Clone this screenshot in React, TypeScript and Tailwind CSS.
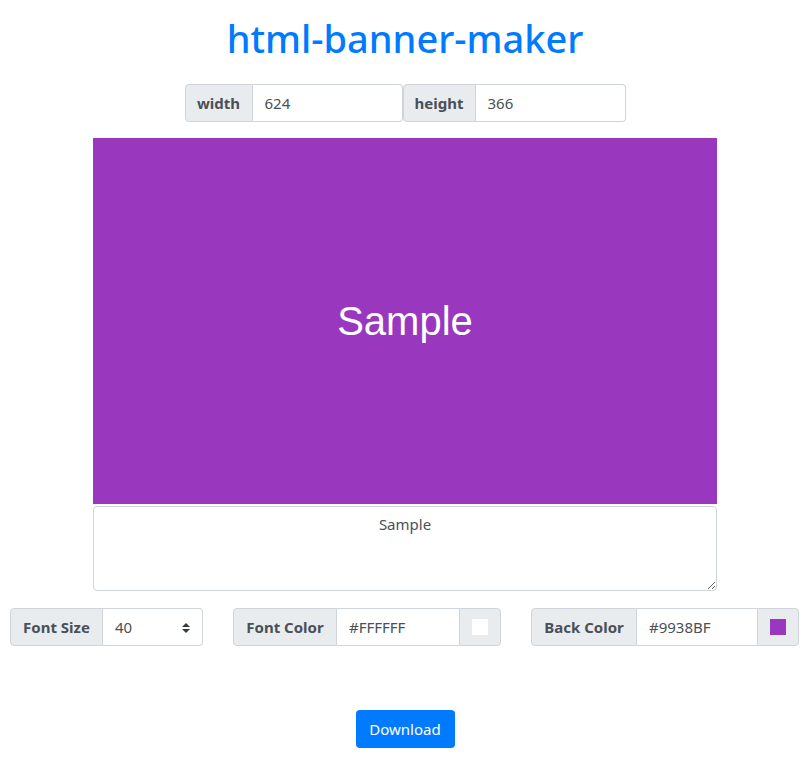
import { useState } from 'react';

const font = { fontFamily: '"Noto Sans", "Open Sans", sans-serif' };

function Addon({ label, w }: { label: string; w: string }) {
  return (
    <span
      className={`flex items-center justify-center ${w} h-full bg-[#e9ecef] border border-[#ced4da] text-[#495057] font-bold text-[15px]`}
    >
      {label}
    </span>
  );
}

function Swatch({ color }: { color: string }) {
  return (
    <span className="flex items-center justify-center w-[42px] h-full bg-[#e9ecef] border border-[#ced4da] rounded-r">
      <span className="block w-[16px] h-[16px]" style={{ backgroundColor: color }} />
    </span>
  );
}

export default function App() {
  const [width, setWidth] = useState('624');
  const [height, setHeight] = useState('366');
  const [text, setText] = useState('Sample');
  const [fontColor, setFontColor] = useState('#FFFFFF');
  const [backColor, setBackColor] = useState('#9938BF');

  return (
    <div className="w-[810px] min-h-[772px] bg-white flex flex-col items-center" style={font}>
      <h1 className="mt-[14px] text-[38px] leading-[48px] font-medium text-[#007bff]">html-banner-maker</h1>

      {/* size inputs */}
      <div className="mt-[22px] flex h-[38px]">
        <div className="flex h-full">
          <span className="flex items-center justify-center w-[68px] h-full bg-[#e9ecef] border border-[#ced4da] rounded-l text-[#495057] font-bold text-[15px]">
            width
          </span>
          <input
            value={width}
            onChange={e => setWidth(e.target.value)}
            className="w-[150px] h-full border border-l-0 border-[#ced4da] rounded-r px-3 text-[15px] text-[#495057] outline-none"
          />
        </div>
        <div className="flex h-full">
          <span className="flex items-center justify-center w-[73px] h-full bg-[#e9ecef] border border-[#ced4da] rounded-l text-[#495057] font-bold text-[15px]">
            height
          </span>
          <input
            value={height}
            onChange={e => setHeight(e.target.value)}
            className="w-[150px] h-full border border-l-0 border-[#ced4da] rounded-r px-3 text-[15px] text-[#495057] outline-none"
          />
        </div>
      </div>

      {/* banner */}
      <div
        className="mt-[16px] w-[624px] h-[366px] flex items-center justify-center text-[40px]"
        style={{ backgroundColor: backColor, color: fontColor, fontFamily: '"Liberation Sans", Arial, sans-serif' }}
      >
        {text}
      </div>

      <textarea
        value={text}
        onChange={e => setText(e.target.value)}
        className="mt-[2px] w-[624px] h-[85px] border border-[#ced4da] rounded px-3 py-[6px] text-center text-[15px] text-[#495057] outline-none"
      />

      {/* style controls */}
      <div className="mt-[17px] w-full pl-[10px] pr-[11px] flex justify-between h-[38px]">
        <div className="flex h-full">
          <span className="flex items-center justify-center w-[93px] h-full bg-[#e9ecef] border border-[#ced4da] rounded-l text-[#495057] font-bold text-[15px]">
            Font Size
          </span>
          <div className="relative w-[100px] h-full border border-l-0 border-[#ced4da] rounded-r flex items-center px-3 text-[15px] text-[#495057]">
            40
            <svg className="absolute right-[12px] top-[14px]" width="8" height="10" viewBox="0 0 8 10">
              <path d="M4 0 L8 4 H0 Z M0 6 H8 L4 10 Z" fill="#343a40" />
            </svg>
          </div>
        </div>

        <div className="flex h-full">
          <Addon label="Font Color" w="w-[104px] rounded-l" />
          <input
            value={fontColor}
            onChange={e => setFontColor(e.target.value)}
            className="w-[122px] h-full border-y border-[#ced4da] px-3 text-[15px] text-[#495057] outline-none"
          />
          <Swatch color={fontColor} />
        </div>

        <div className="flex h-full">
          <Addon label="Back Color" w="w-[106px] rounded-l" />
          <input
            value={backColor}
            onChange={e => setBackColor(e.target.value)}
            className="w-[120px] h-full border-y border-[#ced4da] px-3 text-[15px] text-[#495057] outline-none"
          />
          <Swatch color={backColor} />
        </div>
      </div>

      <button className="mt-[64px] w-[99px] h-[38px] rounded bg-[#007bff] text-white text-[15px]">
        Download
      </button>
    </div>
  );
}
